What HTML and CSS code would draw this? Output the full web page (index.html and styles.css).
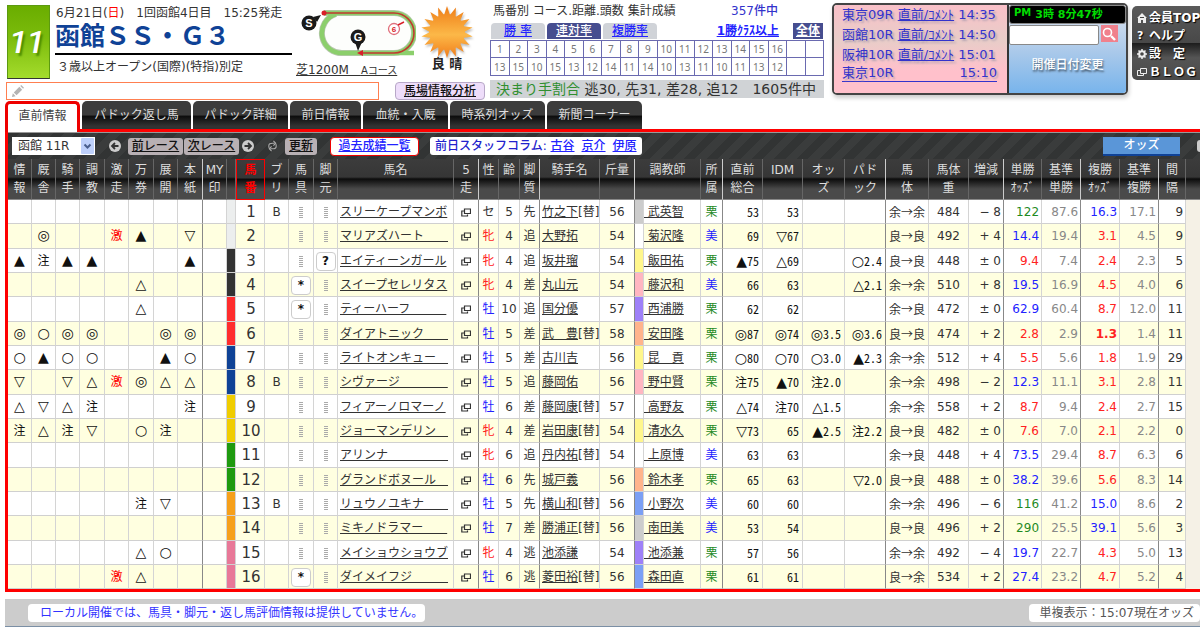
FILE: index.html
```html
<!DOCTYPE html>
<html lang="ja">
<head>
<meta charset="utf-8">
<title>函館11R 函館ＳＳ・Ｇ３</title>
<link rel="stylesheet" href="styles.css">
</head>
<body>
<header class="top">
  <section class="race">
    <div class="race-main">
      <div class="badge">11</div>
      <div class="race-info">
        <p class="race-date">6月21日(<span class="sunday">日</span>)　1回函館4日目　15:25発走</p>
        <h1 class="race-title">函館ＳＳ・Ｇ３</h1>
        <p class="race-cond">３歳以上オープン(国際)(特指)別定</p>
      </div>
      <div class="course">
        <svg class="course-map" viewBox="0 0 120 54" aria-hidden="true">
          <path d="M28 8H98A20 20 0 0 1 98 48H48A20 20 0 0 1 40 9" fill="#fdfefc" stroke="#b9c7b0" stroke-width="6"/>
          <path d="M28 8H98A20 20 0 0 1 98 48H48A20 20 0 0 1 40 9M98 48H118" fill="none" stroke="#8ccf6c" stroke-width="4.500"/>
          <path d="M28 8H98A20 20 0 0 1 98 48H64" fill="none" stroke="#c03a2e" stroke-width="1.600"/>
          <circle cx="28" cy="8" r="2.500" fill="#d8202a"/>
          <path d="M61 48l6-3v6z" fill="#d8202a"/>
          <path d="M17 12l8-2-4 7zM59 37h7l-4 9z" fill="#1a1a1a"/>
          <circle cx="13" cy="18" r="7.500" fill="#1a1a1a"/>
          <circle cx="62" cy="32" r="7.500" fill="#1a1a1a"/>
          <circle cx="98" cy="24" r="5.500" fill="#fff" stroke="#e0707c" stroke-width="1.300"/>
          <path d="M102 20l6-3" stroke="#d8202a" stroke-width="1.500"/>
          <text x="13" y="22" class="pin">S</text>
          <text x="62" y="36" class="pin">G</text>
          <text x="98" y="27" class="pin-six">6</text>
        </svg>
        <p class="course-name"><a href="#">芝1200M　<small>Aコース</small></a></p>
      </div>
      <div class="weather">
        <svg class="sun" viewBox="-27 -27 54 54" aria-hidden="true">
          <defs>
            <linearGradient id="sunfill" x1="0" y1="0" x2="0" y2="1">
              <stop offset="0" stop-color="#ee7a14"/><stop offset=".55" stop-color="#fcb848"/><stop offset="1" stop-color="#f07a18"/>
            </linearGradient>
            <clipPath id="rays">
              <path d="M0-26L8.600 0 0 26-8.600 0z"/>
              <path d="M0-26L8.600 0 0 26-8.600 0z" transform="rotate(20)"/>
              <path d="M0-26L8.600 0 0 26-8.600 0z" transform="rotate(40)"/>
              <path d="M0-26L8.600 0 0 26-8.600 0z" transform="rotate(60)"/>
              <path d="M0-26L8.600 0 0 26-8.600 0z" transform="rotate(80)"/>
              <path d="M0-26L8.600 0 0 26-8.600 0z" transform="rotate(100)"/>
              <path d="M0-26L8.600 0 0 26-8.600 0z" transform="rotate(120)"/>
              <path d="M0-26L8.600 0 0 26-8.600 0z" transform="rotate(140)"/>
              <path d="M0-26L8.600 0 0 26-8.600 0z" transform="rotate(160)"/>
              <circle r="18"/>
            </clipPath>
          </defs>
          <rect x="-27" y="-27" width="54" height="54" fill="url(#sunfill)" clip-path="url(#rays)"/>
        </svg>
        <p class="weather-text">良 晴</p>
      </div>
    </div>
    <div class="memo-row">
      <label class="memo">
        <svg class="pencil" viewBox="0 0 14 14" aria-hidden="true"><path d="M1 13l1-4 3 3zM3 8l6-6 3 3-6 6zM10 1l1-1 3 3-1 1z" fill="#b4b4b4"/></svg>
        <input type="text" aria-label="メモ">
      </label>
      <a class="baba" href="#">馬場情報分析</a>
    </div>
  </section>

  <section class="stats">
    <div class="stats-head"><span>馬番別 コース.距離.頭数 集計成績</span><span class="stats-count">357件中</span></div>
    <div class="stats-tabs">
      <a href="#" class="stab">勝 率</a><a href="#" class="stab stab-on">連対率</a><a href="#" class="stab">複勝率</a>
      <a href="#" class="klass">1勝ｸﾗｽ以上</a><a href="#" class="whole">全体</a>
    </div>
    <table class="stats-table"><tbody id="stats"></tbody></table>
    <p class="kimarite"><span>決まり手割合</span> 逃30, 先31, 差28, 追12　1605件中</p>
  </section>

  <section class="panel">
    <ul class="next">
      <li><span>東京09R</span> <a href="#">直前/ｺﾒﾝﾄ</a> 14:35</li>
      <li><span>函館10R</span> <a href="#">直前/ｺﾒﾝﾄ</a> 14:50</li>
      <li><span>阪神10R</span> <a href="#">直前/ｺﾒﾝﾄ</a> 15:01</li>
      <li><a class="next-last" href="#"><span>東京10R</span><span>15:10</span></a></li>
    </ul>
    <div class="tools">
      <div class="clock"><small>PM</small>3時 8分47秒</div>
      <div class="search">
        <input type="text" aria-label="検索">
        <button type="button" aria-label="検索する"><svg viewBox="0 0 16 16"><circle cx="6.500" cy="6.500" r="4" fill="none" stroke="#fff" stroke-width="1.600"/><path d="M10 10l4 4" stroke="#fff" stroke-width="2.400"/></svg></button>
      </div>
      <button type="button" class="change-date">開催日付変更</button>
    </div>
  </section>

  <nav class="menu">
    <a href="#"><svg viewBox="0 0 10 10"><path d="M0 5l5-5 5 5H9v5H6V7H4v3H1V5z" fill="#eee"/><path d="M3 4.500h4" stroke="#444"/></svg>会員TOP</a>
    <a href="#"><b class="q">?</b>ヘルプ</a>
    <a href="#"><svg viewBox="0 0 10 10"><circle cx="5" cy="5" r="2.800" fill="none" stroke="#eee" stroke-width="2"/><path d="M5 0v2M5 8v2M0 5h2M8 5h2M1.500 1.500l1.400 1.400M7 7l1.500 1.500M8.500 1.500L7 3M3 7L1.500 8.500" stroke="#eee" stroke-width="1.500"/></svg>設　定</a>
    <a href="#"><svg viewBox="0 0 10 10"><path d="M3.500 1.500h6v5h-6zM3 3.500H.5v5h6V7" fill="none" stroke="#eee"/></svg>ＢＬＯＧ</a>
  </nav>
</header>

<nav class="tabs">
  <a href="#" class="tab tab-on">直前情報</a>
  <a href="#" class="tab tab-l">パドック返し馬</a>
  <a href="#" class="tab tab-m">パドック詳細</a>
  <a href="#" class="tab tab-s">前日情報</a>
  <a href="#" class="tab tab-n">血統・入厩</a>
  <a href="#" class="tab tab-m">時系列オッズ</a>
  <a href="#" class="tab tab-m">新聞コーナー</a>
</nav>

<main class="board">
  <div class="bar">
    <span class="pick">
      <select aria-label="レース"><option>函館 11R</option></select>
      <svg viewBox="0 0 13 16" aria-hidden="true"><rect width="13" height="16" rx="1" fill="#bed0fb"/><path d="M3.500 6.500l3 3 3-3" fill="none" stroke="#4a5f8e" stroke-width="2"/></svg>
    </span>
    <svg class="dot" viewBox="0 0 12 12" aria-hidden="true"><circle cx="6" cy="6" r="6" fill="#ccc"/><path d="M9.500 6H3M6 3L3 6l3 3" fill="none" stroke="#333" stroke-width="1.800"/></svg>
    <span class="moves"><a href="#">前レース</a><a href="#">次レース</a></span>
    <svg class="dot" viewBox="0 0 12 12" aria-hidden="true"><circle cx="6" cy="6" r="6" fill="#ccc"/><path d="M2.500 6H9M6 3l3 3-3 3" fill="none" stroke="#333" stroke-width="1.800"/></svg>
    <svg class="spin" viewBox="0 0 12 12" aria-hidden="true"><path d="M2 8V5.500Q2 3 6 3H8M10 4v2.500Q10 9 6 9H4M7 .5L9.500 3 7 5.500M5 6.500L2.500 9 5 11.500" fill="none" stroke="#aaa" stroke-width="1.200"/></svg>
    <a class="reload" href="#">更新</a>
    <a class="past" href="#">過去成績一覧</a>
    <span class="column">前日スタッフコラム: <a href="#">古谷</a><a href="#">京介</a><a href="#">伊原</a></span>
    <button type="button" class="odds">オッズ</button>
    <span class="edge"></span>
  </div>
  <table class="grid">
    <colgroup id="cols"></colgroup>
    <thead><tr id="head"></tr></thead>
    <tbody id="rows"></tbody>
  </table>
</main>

<footer class="foot">
  <p class="foot-note">ローカル開催では、馬具・脚元・返し馬評価情報は提供していません。</p>
  <p class="foot-time">単複表示：15:07現在オッズ</p>
</footer>
<script src="app.js"></script>
</body>
</html>
```
FILE: styles.css
```css
* { box-sizing: border-box; }
body {
  margin: 0;
  background: #fff;
  color: #333;
  font: 12px/18px "DejaVu Sans", "Noto Sans CJK JP", sans-serif;
  overflow-x: hidden;
}
p, h1, ul { margin: 0; padding: 0; }
button, input, select { font: inherit; margin: 0; }

/* header */
.top { display: flex; align-items: flex-start; padding: 0 0 1px 6px; }
.race { flex: 0 0 479px; }
.race-main { display: flex; height: 82px; padding-top: 5px; }
.badge {
  width: 43px; height: 74px; margin-left: 1px; padding-right: 4px;
  background: linear-gradient(#6aad00, #7cbc0c 45%, #a4dc2c);
  border: 1px solid #5c9a10; border-bottom-color: #333;
  color: #fff; font: italic 32px/72px Roboto, sans-serif; text-align: center;
  text-shadow: 1px 0 0 #fff, 3px 3px 2px #4a8a00;
}
.race-info { width: 237px; margin-left: 5px; }
.race-date { line-height: 16px; white-space: nowrap; padding-left: 1px; }
.sunday { color: #f00; }
.race-title {
  font-size: 25px; line-height: 32px; font-weight: bold; color: #0f4296;
  border-bottom: 2px solid #000; white-space: nowrap;
}
.race-cond { line-height: 24px; padding-left: 2px; white-space: nowrap; }
.course { width: 124px; margin-left: 4px; }
.course-map { display: block; width: 120px; height: 54px; }
.pin { font: bold 11px "Liberation Sans", sans-serif; fill: #fff; text-anchor: middle; }
.pin-six { font: bold 8px "Liberation Sans", sans-serif; fill: #d8202a; text-anchor: middle; }
.course-name { line-height: 22px; white-space: nowrap; }
.course-name a { color: #333; }
.course-name small { font-size: 10px; }
.weather { width: 54px; text-align: center; }
.sun { display: block; width: 54px; height: 54px; filter: drop-shadow(1px 2px 1px #bbb); }
.weather-text { font-size: 13px; line-height: 10px; font-weight: bold; color: #222; }
.memo-row { display: flex; gap: 16px; }
.memo { display: flex; flex: 1; align-items: center; height: 18px; border: 1px solid #ff7f50; padding-left: 4px; }
.memo input { flex: 1; min-width: 0; height: 14px; border: 0; padding: 0 4px; }
.pencil { width: 13px; height: 13px; }
.baba {
  width: 90px; height: 18px; line-height: 16px; text-align: center;
  background: #eeddfa; border: 1px solid #b8a8c8; border-radius: 4px;
  color: #111; font-weight: 500;
}

.stats { flex: 0 0 334px; margin-left: 5px; padding-top: 2px; }
.stats-head { display: flex; padding-left: 3px; height: 20px; white-space: nowrap; }
.stats-count { color: #33c; font-weight: 500; margin-left: auto; padding-right: 46px; }
.stats-tabs { display: flex; gap: 2px; height: 16px; line-height: 16px; margin: 1px 1px 1px; }
.stab { width: 54px; text-align: center; background: #d0d3d8; border-radius: 4px 4px 0 0; color: #22f; font-weight: 500; }
.stab-on { background: #464d8f; color: #fff; }
.klass { margin-left: auto; margin-right: 12px; color: #22f; font-weight: bold; white-space: nowrap; }
.whole { width: 30px; text-align: center; background: #464d8f; color: #fff; font-weight: bold; }
.stats-table { width: 100%; border-collapse: collapse; table-layout: fixed; font: 10px/16px "Noto Sans", sans-serif; color: #777; }
.stats-table td { border: 1px solid #6a6ab0; padding: 0; height: 16px; text-align: center; }
.stats-table tr + tr td { height: 18px; }
.kimarite { margin-top: 4px; padding-left: 6px; background: #d0d3d6; font-size: 14px; line-height: 18px; white-space: nowrap; }
.kimarite span { color: #2f8f2f; }

.panel {
  flex: 1 0 296px; display: flex; height: 92px; margin: 3px 4px 0 8px;
  border: 2px solid #444; border-radius: 5px; box-shadow: 1px 3px 4px #ccc; overflow: hidden;
}
.next {
  flex: 1 0 175px; list-style: none; padding-left: 8px; color: #33c; font-size: 13px; line-height: 20px;
  background: linear-gradient(#f9c0c8, #e8cdc8 40%, #ffc0cb 75%);
  text-shadow: 2px 2px 2px #b0a0b0; white-space: nowrap; border-right: 2px solid #333;
}
.next a { color: #33c; }
.next-last { display: flex; justify-content: space-between; width: 155px; line-height: 16px; border-bottom: 1px solid #33c; text-decoration: none; }
.tools { flex: 0 0 117px; background: linear-gradient(#dfe4ee, #a8c8ea 55%, #78b4ec); text-align: center; }
.clock {
  display: flex; height: 19px; padding-left: 4px; gap: 4px; background: #000; border: 1px solid #888; border-radius: 3px;
  color: #0d0; font-size: 11px; line-height: 18px; font-weight: bold; white-space: nowrap;
}
.clock small { font-size: 10px; line-height: 13px; }
.search { display: flex; gap: 2px; margin-top: 1px; }
.search input { width: 90px; height: 20px; border: 1px solid #888; background: #fff; border-radius: 2px; }
.search button { width: 17px; height: 17px; padding: 0; border: 0; background: #f0808c; }
.search svg { display: block; width: 16px; height: 16px; }
.change-date { border: 0; background: none; color: #fff; font-weight: 500; margin-top: 11px; padding: 0; text-shadow: 1px 2px 2px #456; }

.menu {
  flex: 0 0 68px; margin-top: 6px; height: 74px; padding: 3px 0 0 5px; border-radius: 5px 0 0 5px; overflow: hidden;
  background: linear-gradient(#5a5a5a, #484848 50%, #1c1c1c 50%, #555 70%, #4a4a4a);
}
.menu a { display: flex; align-items: center; gap: 2px; height: 18px; color: #fff; font-weight: bold; text-decoration: none; white-space: nowrap; text-shadow: 1px 1px 1px #000; }
.menu svg, .q { flex: 0 0 10px; width: 10px; height: 10px; line-height: 10px; font-size: 11px; }

/* tabs */
.tabs { display: flex; gap: 2px; height: 28px; margin-left: 5px; }
.tab {
  height: 28px; text-align: center; line-height: 28px; color: #ddd; text-decoration: none; white-space: nowrap;
  background: linear-gradient(#3c3c3c 0, #3c3c3c 50%, #0c0c0c 54%, #333 90%); border-radius: 5px 5px 0 0;
}
.tab-on {
  position: relative; width: 75px; height: 31px; color: #444; background: #fff;
  border: solid #e00; border-width: 3px 3px 0; line-height: 24px;
}
.tab-l { width: 109px; }
.tab-m { width: 95px; }
.tab-s { width: 71px; }
.tab-n { width: 85px; }

/* board */
.board { margin-left: 5px; border: solid #f00; border-width: 3px 0 3px 3px; }
.bar {
  display: flex; align-items: center; height: 27px; padding-left: 4px; border-top: 1px solid #999; overflow: hidden;
  background: repeating-linear-gradient(135deg, #323434 0 8px, #3a3c3c 8px 16px);
  white-space: nowrap;
}
.bar > * { flex-shrink: 0; }
.pick { display: flex; align-items: center; width: 83px; height: 18px; background: #fff; padding-right: 1px; }
.pick select { flex: 1; appearance: none; border: 0; background: #fff; color: #333; height: 18px; line-height: 18px; padding: 0 0 0 6px; }
.pick svg { width: 13px; height: 16px; }
.dot { width: 12px; height: 12px; margin-left: 14px; }
.moves { display: flex; gap: 1px; margin-left: 7px; }
.moves + .dot { margin-left: 3px; }
.moves a, .reload {
  width: 55px; height: 17px; line-height: 17px; text-align: center; background: #b8b0b4; color: #111; border-radius: 3px; font-weight: 500;
}
.spin { width: 11px; height: 12px; margin: 0 7px 0 13px; }
.reload { width: 32px; }
.past { width: 89px; height: 19px; line-height: 17px; margin-left: 13px; text-align: center; background: #fff; border: 1px solid #e00; border-radius: 4px; color: #22f; font-weight: 500; }
.column { height: 18px; margin-left: 11px; padding: 0 5px; background: #fff; border-radius: 3px; color: #22c; font-weight: 500; }
.column a { color: #22f; margin-right: 7px; }
.column a:last-child { margin-right: 0; }
.odds {
  width: 77px; height: 19px; margin-left: auto; margin-right: 17px; padding: 0; border: 0; border-bottom: 2px solid #0f4296;
  background: #5a96d8; color: #fff; line-height: 17px; font-weight: 500;
}
.edge { width: 3px; height: 12px; border-radius: 6px 0 0 6px; background: #ccc; }

.grid { width: 100%; table-layout: fixed; border-collapse: separate; border-spacing: 0; }
.grid th {
  height: 41px; padding: 2px 0 0; vertical-align: top; font-weight: normal; color: #ddd; line-height: 18px; white-space: nowrap;
  background: linear-gradient(#3c3c3c 0, #363636 45%, #0c0c0c 50%, #4a4a4a 75%, #4a4a4a);
  border-right: 1px solid #666; border-bottom: 1px solid #888; overflow: hidden;
}
.grid th.hot { color: #f00; font-weight: bold; border: 1px solid #f00; padding-top: 1px; }
.grid th.thick { border-right: 1px solid #ccc; }
.grid th.plain { border-right: 0; }
.grid td {
  height: 24px; padding: 0; text-align: center; white-space: nowrap; line-height: 20px;
  border-right: 1px solid #d4d4d4; border-bottom: 1px solid #d0d0d0; overflow: hidden;
}
.grid tbody tr:nth-child(3n+2) td { height: 25px; }
.grid tbody tr:nth-child(even) { background: #ffffe0; }
.grid td.thick { border-right: 1px solid #888; }
.grid a { color: #333; }
.grid .mark { color: #111; }
.grid .body { font-family: "Noto Sans CJK JP", sans-serif; }
.grid .half { font-family: "Noto Sans CJK JP", sans-serif; font-feature-settings: "hwid"; text-align: right; padding-right: 3px; color: #111; }
.sym { font-family: "DejaVu Sans", sans-serif; font-size: 14px; line-height: 18px; }
.grid .gekisou { color: #f00; }
.grid .num { font-size: 15px; padding-left: 2px; }
.grid .name, .grid .jockey { text-align: left; padding-left: 2px; }
.grid .trainer { text-align: left; line-height: 22px; }
.grid .trainer a { white-space: pre; }
.grid .right { text-align: right; padding-right: 2px; }
.grid .base { color: #888; }
.grid .rest { background: #f5f1e6; border: 0; }
.red { color: #f22; }
.blue { color: #22f; }
.green { color: #1f8a1f; }
.grid td.top-odds { font-weight: bold; }
.tag { display: inline-block; width: 20px; height: 19px; line-height: 17px; background: #fff; border: 1px solid #ccc; border-radius: 4px; font-weight: bold; color: #111; vertical-align: middle; }
.empty-tag, .pop { display: inline-block; vertical-align: middle; }
.empty-tag { width: 4px; height: 11px; background: repeating-linear-gradient(#aaa 0 1px, #fff0 1px 2px); }
.pop { width: 10px; height: 9px; }

.w1 { background: #eceeee; } .w2 { background: #333; } .w3 { background: #ff2d2d; } .w4 { background: #0f4296; }
.w5 { background: #f0cd00; } .w6 { background: #1f9a10; } .w7 { background: #f6a01a; } .w8 { background: #e87898; }
.s-gray { background: #ccc; } .s-yellow { background: #fff68c; } .s-pink { background: #ffb6c1; }
.s-purple { background: #9e80f8; } .s-orange { background: #ffb48c; } .s-sky { background: #7b9ff5; } .s-none { background: #fff; }

/* footer */
.foot {
  display: flex; justify-content: space-between; align-items: center; height: 28px; margin: 7px 0 0 5px; padding-left: 23px;
  background: #ccc; border-bottom: 1px solid #7b8fa5;
}
.foot p { background: #fff; border-radius: 4px; white-space: nowrap; line-height: 18px; }
.foot-note { width: 397px; padding-left: 12px; color: #33f; }
.foot-time { padding: 0 6px 0 10px; border-radius: 4px 0 0 4px; color: #555; }
```
FILE: app.js
```js
var widths = [24,24,24,25,24,25,24,25,24,9,29,24,25,24,116,25,20,21,20,60,35,9,57,22,40,40,42,41,43,40,35,38,39,39,39,27,14];
document.getElementById('cols').innerHTML = widths.map(function (w) { return '<col style="width:' + w + 'px">'; }).join('');

var heads = ['情/報','厩/舎','騎/手','調/教','激/走','万/券','展/開','本/紙|thick','MY/印','','馬/番|hot','ブ/リ','馬/具','脚/元','馬名','5/走|thick','性','齢','脚/質|thick','騎手名','斤量|thick','調教師|2','所/属|thick','直前/総合','IDM','オッ/ズ','パド/ック|thick','馬/体','馬体/重','増減|thick','単勝/ｵｯｽﾞ','基準/単勝|thick','複勝/ｵｯｽﾞ','基準/複勝|thick','間/隔','|plain'];
document.getElementById('head').innerHTML = heads.map(function (h) {
  var p = h.split('|');
  var attr = p[1] === '2' ? ' colspan="2"' : p[1] ? ' class="' + p[1] + '"' : '';
  return '<th' + attr + '>' + p[0].replace('/', '<br>') + '</th>';
}).join('');

// marks | blinker | gear | legs | name | sex | age | style | jockey | change | weight | stable colour | trainer | base
// | total | IDM | odds | paddock | body | kg | diff | win | win base | place | place base | weeks
var data = [
'--------|B|||スリーケープマンボ|セ|5|先|竹之下|替|56|gray|武英智|栗|53|53|||余→余|484|− 8|122|87.6|16.3|17.1|9',
'-◎--激▲-▽||||マリアズハート　　|牝|4|追|大野拓||54|none|菊沢隆|美|69|▽67|||良→良|492|+ 4|14.4|19.4|3.1|4.5|9',
'▲注▲▲---▲|||?|エイティーンガール|牝|4|追|坂井瑠||54|yellow|飯田祐|栗|▲75|△69||○2.4|良→良|448|± 0|9.4|7.4|2.4|2.3|5',
'-----△--||*||スイープセレリタス|牝|4|差|丸山元||54|pink|藤沢和|美|66|63||△2.1|余→余|510|+ 8|19.5|16.9|4.5|4.0|6',
'-----△--||*||ティーハーフ　　　|牡|10|追|国分優||57|purple|西浦勝|栗|62|62|||余→良|472|± 0|62.9|60.4|8.7|12.0|11',
'◎○◎◎--◎◎||||ダイアトニック　　|牡|5|差|武　豊|替|58|orange|安田隆|栗|◎87|◎74|◎3.5|◎3.6|良→良|474|+ 2|2.8|2.9|1.3|1.4|11',
'○▲○○--▲○||||ライトオンキュー　|牡|5|差|古川吉||56|yellow|昆　貢|栗|○80|○70|○3.0|▲2.3|余→余|512|+ 4|5.5|5.6|1.8|1.9|29',
'▽-▽△激◎△△|B|||シヴァージ　　　　|牡|5|追|藤岡佑||56|pink|野中賢|栗|注75|▲70|注2.0||余→余|498|− 2|12.3|11.1|3.1|2.8|11',
'△▽△注---注||||フィアーノロマーノ|牡|6|差|藤岡康|替|57|none|高野友|栗|△74|注70|△1.5||余→余|558|+ 2|8.7|9.4|2.4|2.7|15',
'注△注▽-○注-||||ジョーマンデリン　|牝|4|差|岩田康|替|54|yellow|清水久|栗|▽73|65|▲2.5|注2.2|良→良|482|± 0|7.6|7.0|2.1|2.2|0',
'--------||||アリンナ　　　　　|牝|6|追|丹内祐|替|54|none|上原博|美|63|63|||余→良|448|+ 4|73.5|29.4|8.7|6.3|6',
'--------||||グランドボヌール　|牡|6|先|城戸義||56|orange|鈴木孝|栗|65|63||▽2.0|良→良|488|± 0|38.2|39.6|5.6|8.3|14',
'-----注▽-|B|||リュウノユキナ　　|牡|5|先|横山和|替|56|sky|小野次|美|60|60|||余→余|496|− 6|116|41.2|15.0|8.6|2',
'--------||||ミキノドラマー　　|牡|7|差|勝浦正|替|56|gray|南田美|美|53|54|||良→良|496|+ 2|290|25.5|39.1|5.6|3',
'-----△○-||||メイショウショウブ|牝|4|逃|池添謙||54|purple|池添兼|栗|57|56|||余→余|492|− 4|19.7|22.7|4.3|5.0|13',
'----激△--||*||ダイメイフジ　　　|牡|6|逃|菱田裕|替|56|sky|森田直|栗|61|61|||良→余|534|+ 2|27.4|23.2|4.7|5.2|4'
];

function td(cls, html) { return '<td' + (cls ? ' class="' + cls + '"' : '') + '>' + (html || '') + '</td>'; }
function gear(v) { return v ? '<span class="tag">' + v + '</span>' : '<span class="empty-tag"></span>'; }
function index(v) { return v.replace(/[◎○▲△▽]/, '<span class="sym">$&</span>'); }
function oddsColor(v) { return v >= 100 ? 'green' : v >= 10 ? 'blue' : 'red'; }
var pop = '<svg class="pop" viewBox="0 0 10 9"><path d="M3.500 1h6v4.500h-6zM3 3H.8v5h5.700V6.500" fill="none" stroke="#333" stroke-width="1.200"/></svg>';

document.getElementById('rows').innerHTML = data.map(function (line, i) {
  var d = line.split('|');
  var html = d[0].split('').map(function (m, k) {
    return td('mark' + (m === '激' ? ' gekisou' : '') + (k === 7 ? ' thick' : ''), m === '-' ? '' : index(m));
  }).join('');
  html += td('') + td('w' + (Math.floor(i / 2) + 1)) + td('num', i + 1);
  html += td('', d[1]) + td('', gear(d[2])) + td('', gear(d[3]));
  html += td('name', '<a href="#">' + d[4] + '</a>') + td('thick', pop);
  html += td(d[5] === '牝' ? 'red' : d[5] === '牡' ? 'blue' : '', d[5]) + td('', d[6]) + td('thick', d[7]);
  html += td('jockey', '<a href="#">' + d[8] + '</a>' + (d[9] ? '[' + d[9] + ']' : '')) + td('thick', d[10]);
  html += td('s-' + d[11]) + td('trainer', '<a href="#"> ' + d[12] + '</a>');
  html += td('thick ' + (d[13] === '美' ? 'blue' : 'green'), d[13]);
  html += td('half', index(d[14])) + td('half', index(d[15])) + td('half', index(d[16])) + td('half thick', index(d[17]));
  html += td('body', d[18]) + td('', d[19]) + td('right thick', d[20]);
  html += td('right ' + oddsColor(+d[21]), d[21]) + td('right base thick', d[22]);
  html += td('right ' + oddsColor(+d[23]) + (+d[23] < 1.5 ? ' top-odds' : ''), d[23]) + td('right base thick', d[24]);
  html += td('right', d[25]) + td('rest');
  return '<tr>' + html + '</tr>';
}).join('');

var rates = [13,15,10,15,13,12,14,11,14,10,13,11,10,11,13,12,'',''];
document.getElementById('stats').innerHTML =
  '<tr>' + rates.map(function (r, i) { return td('', i < 16 ? i + 1 : ''); }).join('') + '</tr>' +
  '<tr>' + rates.map(function (r) { return td('', r); }).join('') + '</tr>';
```
